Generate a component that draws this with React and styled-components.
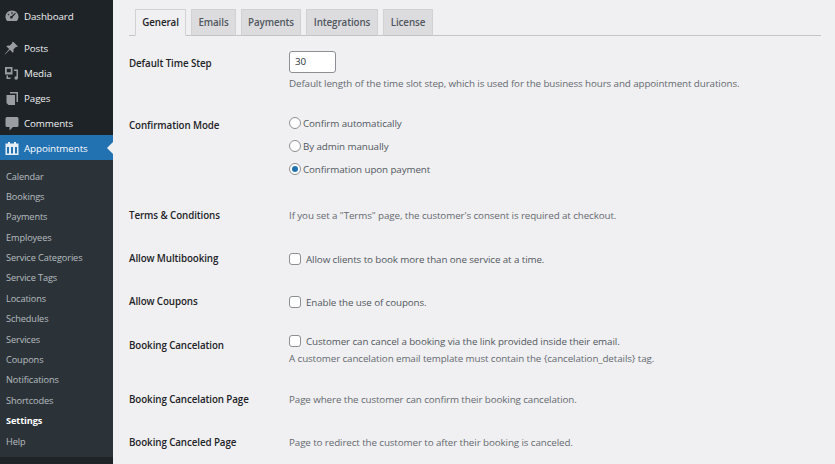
import styled, { createGlobalStyle } from 'styled-components'

const GlobalStyle = createGlobalStyle`
  html, body {
    margin: 0;
    padding: 0;
    background: #f0f0f2;
    overflow: hidden;
  }
  * { box-sizing: border-box; }
`

const Page = styled.div`
  display: flex;
  width: 835px;
  height: 464px;
  overflow: hidden;
  font-family: "Open Sans", "Noto Sans", sans-serif;
  font-size: 9.8px;
  letter-spacing: -0.1px;
  color: #50575e;
`

const Sidebar = styled.nav`
  width: 113px;
  flex: none;
  background: #1d2327;
  padding-top: 3px;
`

const MenuItem = styled.div`
  position: relative;
  display: flex;
  align-items: center;
  gap: 5px;
  height: 25px;
  padding: 1px 0 0 4px;
  margin-bottom: ${p => p.$gap || 0}px;
  font-size: 9.8px;
  color: ${p => (p.$active ? '#fff' : '#f0f0f1')};
  background: ${p => (p.$active ? '#2271b1' : 'transparent')};

  ${p => p.$active && `
    &::after {
      content: '';
      position: absolute;
      right: 0;
      top: 7px;
      border: 6px solid transparent;
      border-right-color: #f0f0f2;
      border-left: 0;
    }
  `}
`

const MenuIcon = styled.span`
  width: 15px;
  height: 15px;
  flex: none;
  display: flex;
  align-items: center;
  justify-content: center;
  color: ${p => (p.$active ? '#e6eef5' : '#9a9ea3')};
`

const Submenu = styled.div`
  background: #2c3338;
  height: 297px;
  padding-top: 6.5px;
`

const SubItem = styled.div`
  height: 20.4px;
  line-height: 20.4px;
  padding-left: 6px;
  font-size: 9.2px;
  color: ${p => (p.$current ? '#fff' : 'rgba(240,246,252,.7)')};
  font-weight: ${p => (p.$current ? 700 : 400)};
`

const Main = styled.main`
  flex: 1;
  padding: 9px 14px 0 16px;
`

const Tabs = styled.div`
  display: flex;
  gap: 5px;
  height: 27px;
  padding-left: 6px;
  border-bottom: 1px solid #c3c4c7;
`

const Tab = styled.div`
  width: ${p => p.$w}px;
  height: 27px;
  line-height: 25px;
  text-align: center;
  font-weight: 600;
  border: 1px solid #d0d1d4;
  border-bottom: ${p => (p.$active ? '1px solid #f0f0f2' : '1px solid #c3c4c7')};
  background: ${p => (p.$active ? '#f0f0f2' : '#dcdcde')};
  color: ${p => (p.$active ? '#1d2327' : '#50575e')};
`

const Row = styled.div`
  display: grid;
  grid-template-columns: 160px 1fr;
  height: ${p => p.$h}px;
  padding-top: ${p => p.$top || 0}px;
`

const Label = styled.div`
  font-weight: 600;
  color: #1d2327;
  line-height: 14px;
  padding-top: ${p => p.$top || 0}px;
`

const Field = styled.div`
  display: flex;
  flex-direction: column;
  align-items: flex-start;
  gap: ${p => p.$gap || 0}px;
`

const NumberInput = styled.div`
  width: 47px;
  height: 22px;
  line-height: 20px;
  padding-left: 5px;
  background: #fff;
  border: 1px solid #8c8f94;
  border-radius: 3px;
  color: #2c3338;
`

const Hint = styled.div`
  line-height: 14px;
  color: #646970;
`

const Option = styled.div`
  display: flex;
  align-items: center;
  height: 14px;
  gap: ${p => p.$gap || 2}px;
`

const Radio = styled.span`
  width: 12px;
  height: 12px;
  flex: none;
  border-radius: 50%;
  border: 1px solid #8c8f94;
  background: #fff;
  display: flex;
  align-items: center;
  justify-content: center;

  &::before {
    content: '';
    width: 6px;
    height: 6px;
    border-radius: 50%;
    background: ${p => (p.$checked ? '#2271b1' : 'transparent')};
  }
`

const Checkbox = styled.span`
  width: 12px;
  height: 12px;
  flex: none;
  border: 1px solid #8c8f94;
  border-radius: 3px;
  background: #fff;
`

function GaugeIcon () {
  return (
    <svg width='14' height='14' viewBox='0 0 14 14' fill='currentColor'>
      <path
        fillRule='evenodd'
        d='M7 1.500c3.600 0 6.500 2.800 6.500 6.300 0 1.700-.6 3.200-1.600 4.200H2.100C1.100 11 .5 9.500.5 7.800.5 4.300 3.400 1.500 7 1.500zM6.500 3v2h1V3zM3.200 4.500l-.7.7 1.400 1.400.7-.7zM10.800 4.500 7.600 7.900a1.300 1.300 0 1 1-1-.9l3.500-3.200z'
      />
    </svg>
  )
}

function PinIcon () {
  return (
    <svg width='15' height='15' viewBox='0 0 15 15' fill='currentColor'>
      <path d='M9.500 1 14 5.500l-1.200.6-.7-.4-2.700 2.700c.4 1.300.2 2.500-.6 3.300L5.900 8.800 1 13.500l-.3-.2 4.500-5.200L2.300 5.300c.8-.8 2-1 3.300-.6l2.700-2.700-.4-.7z' />
    </svg>
  )
}

function MediaIcon () {
  return (
    <svg width='15' height='15' viewBox='0 0 15 15' fill='currentColor'>
      <path fillRule='evenodd' d='M1 1h7.500v7.500H1zM2.800 2.800v3.500h4V2.800z' />
      <path d='M2.500 9.500h1.500v2h2.500V13h-4zM10 3.500h4v8.500a1.800 1.800 0 1 1-1.500-1.800V5H10z' />
    </svg>
  )
}

function PagesIcon () {
  return (
    <svg width='14' height='15' viewBox='0 0 14 15' fill='currentColor'>
      <path d='M5 1h8v10h-1.500V2.500H5z' />
      <path d='M1.500 4h8.500v10H3.500l-2-2z' />
    </svg>
  )
}

function CommentIcon () {
  return (
    <svg width='14' height='15' viewBox='0 0 14 15' fill='currentColor'>
      <path d='M2 1h10a1.500 1.500 0 0 1 1.500 1.500v7A1.500 1.500 0 0 1 12 11H8l-3.500 3.500V11H2A1.500 1.500 0 0 1 .5 9.500v-7A1.500 1.500 0 0 1 2 1z' />
    </svg>
  )
}

function CalendarIcon () {
  return (
    <svg width='14' height='15' viewBox='0 0 14 15' fill='currentColor'>
      <path
        fillRule='evenodd'
        d='M3 1h2v1.500h4V1h2v1.500h2.500V14H.5V2.500H3zM2 6v6.500h2V6zM6 6v6.500h2V6zM10 6v6.500h2V6z'
      />
    </svg>
  )
}

const subItems = [
  'Calendar', 'Bookings', 'Payments', 'Employees', 'Service Categories', 'Service Tags',
  'Locations', 'Schedules', 'Services', 'Coupons', 'Notifications', 'Shortcodes', 'Settings', 'Help'
]

export default function App () {
  return (
    <Page>
      <GlobalStyle />
      <Sidebar>
        <MenuItem $gap={7}><MenuIcon><GaugeIcon /></MenuIcon>Dashboard</MenuItem>
        <MenuItem><MenuIcon><PinIcon /></MenuIcon>Posts</MenuItem>
        <MenuItem><MenuIcon><MediaIcon /></MenuIcon>Media</MenuItem>
        <MenuItem><MenuIcon><PagesIcon /></MenuIcon>Pages</MenuItem>
        <MenuItem><MenuIcon><CommentIcon /></MenuIcon>Comments</MenuItem>
        <MenuItem $active><MenuIcon $active><CalendarIcon /></MenuIcon>Appointments</MenuItem>
        <Submenu>
          {subItems.map(item => (
            <SubItem key={item} $current={item === 'Settings'}>{item}</SubItem>
          ))}
        </Submenu>
      </Sidebar>
      <Main>
        <Tabs>
          <Tab $active $w={51}>General</Tab>
          <Tab $w={45}>Emails</Tab>
          <Tab $w={60}>Payments</Tab>
          <Tab $w={72}>Integrations</Tab>
          <Tab $w={50}>License</Tab>
        </Tabs>
        <Row $h={78} $top={15}>
          <Label $top={6}>Default Time Step</Label>
          <Field $gap={4}>
            <NumberInput>30</NumberInput>
            <Hint>Default length of the time slot step, which is used for the business hours and appointment durations.</Hint>
          </Field>
        </Row>
        <Row $h={92} $top={2}>
          <Label $top={3}>Confirmation Mode</Label>
          <Field $gap={9}>
            <Option><Radio />Confirm automatically</Option>
            <Option><Radio />By admin manually</Option>
            <Option><Radio $checked />Confirmation upon payment</Option>
          </Field>
        </Row>
        <Row $h={43} $top={3}>
          <Label>Terms &amp; Conditions</Label>
          <Hint>If you set a "Terms" page, the customer's consent is required at checkout.</Hint>
        </Row>
        <Row $h={43} $top={3}>
          <Label>Allow Multibooking</Label>
          <Option $gap={5}><Checkbox />Allow clients to book more than one service at a time.</Option>
        </Row>
        <Row $h={42} $top={3}>
          <Label>Allow Coupons</Label>
          <Option $gap={5}><Checkbox />Enable the use of coupons.</Option>
        </Row>
        <Row $h={59}>
          <Label $top={5}>Booking Cancelation</Label>
          <Field $gap={4}>
            <Option $gap={5}><Checkbox />Customer can cancel a booking via the link provided inside their email.</Option>
            <Hint>A customer cancelation email template must contain the {'{cancelation_details}'} tag.</Hint>
          </Field>
        </Row>
        <Row $h={43}>
          <Label>Booking Cancelation Page</Label>
          <Hint>Page where the customer can confirm their booking cancelation.</Hint>
        </Row>
        <Row $h={30}>
          <Label>Booking Canceled Page</Label>
          <Hint>Page to redirect the customer to after their booking is canceled.</Hint>
        </Row>
      </Main>
    </Page>
  )
}
